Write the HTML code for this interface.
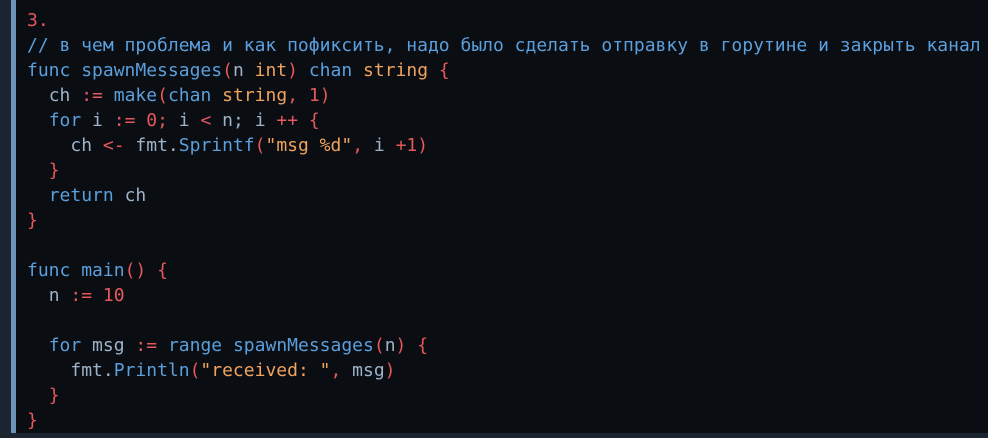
<!DOCTYPE html>
<html><head><meta charset="utf-8"><style>
html,body{margin:0;padding:0;width:988px;height:438px;overflow:hidden;background:#1b2430}
.code{position:absolute;left:16px;top:0;width:972px;height:433px;background:#0a0d12;border-left:0}
.bar{position:absolute;left:11px;top:0;width:5px;height:433px;background:#6f93b8}
.bot{position:absolute;left:0;top:433px;width:988px;height:5px;background:#1b2430}
pre{margin:0;position:absolute;left:27px;top:8px;font-family:"DejaVu Sans Mono","Liberation Mono",monospace;font-size:18px;line-height:25px;color:#9fb3c8;white-space:pre}
.r{color:#e5585c}.b{color:#5b9fdc}.o{color:#f0a35e}.c{color:#5b9fdc}.p{color:#9fb3c8}
</style></head><body>
<div class="code"></div><div class="bar"></div><div class="bot"></div>
<pre><span class="r">3.</span>
<span class="c">// в чем проблема и как пофиксить, надо было сделать отправку в горутине и закрыть канал</span>
<span class="b">func</span> <span class="b">spawnMessages</span><span class="r">(</span><span class="p">n</span> <span class="o">int</span><span class="r">)</span> <span class="b">chan</span> <span class="o">string</span> <span class="r">{</span>
  <span class="p">ch</span> <span class="r">:=</span> <span class="b">make</span><span class="r">(</span><span class="b">chan</span> <span class="o">string</span><span class="r">,</span> <span class="r">1)</span>
  <span class="b">for</span> <span class="p">i</span> <span class="r">:=</span> <span class="r">0;</span> <span class="p">i</span> <span class="r">&lt;</span> <span class="p">n;</span> <span class="p">i</span> <span class="r">++</span> <span class="r">{</span>
    <span class="p">ch</span> <span class="r">&lt;-</span> <span class="p">fmt.</span><span class="b">Sprintf</span><span class="r">(</span><span class="o">"msg %d"</span><span class="r">,</span> <span class="p">i</span> <span class="r">+1)</span>
  <span class="r">}</span>
  <span class="b">return</span> <span class="p">ch</span>
<span class="r">}</span>

<span class="b">func</span> <span class="b">main</span><span class="r">()</span> <span class="r">{</span>
  <span class="p">n</span> <span class="r">:=</span> <span class="r">10</span>

  <span class="b">for</span> <span class="p">msg</span> <span class="r">:=</span> <span class="b">range</span> <span class="b">spawnMessages</span><span class="r">(</span><span class="p">n</span><span class="r">)</span> <span class="r">{</span>
    <span class="p">fmt.</span><span class="b">Println</span><span class="r">(</span><span class="o">"received: "</span><span class="r">,</span> <span class="p">msg</span><span class="r">)</span>
  <span class="r">}</span>
<span class="r">}</span></pre>
</body></html>
